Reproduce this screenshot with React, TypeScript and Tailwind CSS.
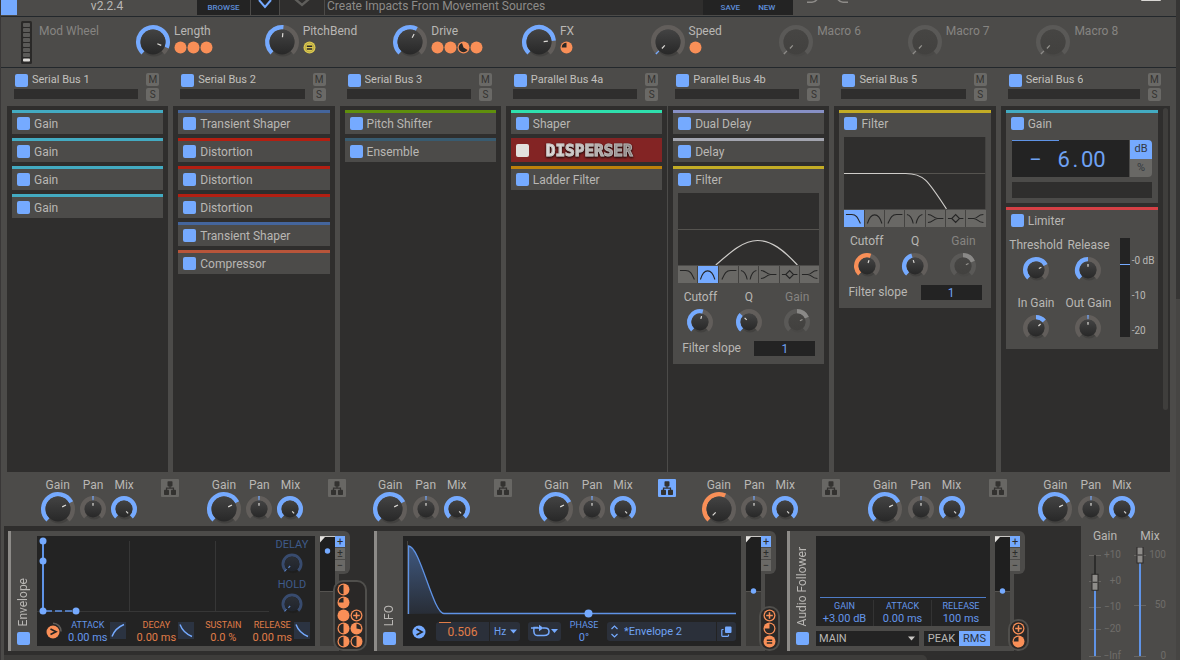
import { useId, useState, type ReactNode } from "react";

const BLUE = "#75aaff";
const ORANGE = "#f98f57";
const SWEEP = 137;

/* ---------- Drawing helpers ---------- */

function point(c: number, r: number, deg: number) {
  const a = (deg * Math.PI) / 180;
  return `${(c + r * Math.sin(a)).toFixed(2)} ${(c - r * Math.cos(a)).toFixed(2)}`;
}

function arc(c: number, r: number, from: number, to: number) {
  const large = to - from > 180 ? 1 : 0;
  return `M${point(c, r, from)} A${r} ${r} 0 ${large} 1 ${point(c, r, to)}`;
}

type KnobProps = {
  label: string;
  value: number;
  pointer?: number;
  size?: "lg" | "md" | "sm";
  tone?: string;
  bipolar?: boolean;
  dim?: boolean;
  navy?: boolean;
};

const KNOB = {
  lg: { box: 36, r: 17, w: 4.4 },
  md: { box: 28, r: 13, w: 4.4 },
  sm: { box: 22, r: 10.5, w: 3 },
};

function Knob({ label, value, pointer, size = "md", tone = BLUE, bipolar, dim, navy }: KnobProps) {
  const [v, setV] = useState(value);
  const gradient = useId();
  const { box, r, w } = KNOB[size];
  const c = box / 2;
  const mid = r - w / 2;
  const body = r - w - 0.2;
  const angle = (v * 2 - 1) * SWEEP;
  const hand = pointer === undefined || v !== value ? angle : pointer;
  let from = -SWEEP;
  let to = Math.max(angle, -SWEEP + 5);
  if (bipolar) {
    from = Math.min(0, angle);
    to = Math.max(0, angle);
    if (to - from < 5) {
      from -= 3;
      to += 3;
    }
  }
  const track = navy ? "#384b6e" : dim ? "#5a5957" : "#625e5b";
  const top = navy ? "#2b2f36" : dim ? "#464543" : "#434343";
  const bottom = navy ? "#20242b" : dim ? "#42413f" : "#282828";
  return (
    <span className="relative block shrink-0">
      <svg className="block" width={box} height={box} viewBox={`0 0 ${box} ${box}`} fill="none" aria-hidden="true">
        <defs>
          <linearGradient id={gradient} x1="0" y1="0" x2="0" y2="1">
            <stop offset="0" stopColor={top} />
            <stop offset="1" stopColor={bottom} />
          </linearGradient>
        </defs>
        <circle cx={c + 1} cy={c + 1} r={body + 1} fill="#000" opacity={dim ? 0.04 : 0.13} />
        <path d={arc(c, mid, -SWEEP, SWEEP)} stroke={track} strokeWidth={w} />
        <path d={arc(c, mid, from, to)} stroke={tone} strokeWidth={w} />
        <circle cx={c} cy={c} r={body} fill={`url(#${gradient})`} />
        <path
          d={`M${point(c, body * 0.38, hand)} L${point(c, body * 0.72, hand)}`}
          stroke={navy ? "#5b86cc" : dim ? "#96948f" : "#dedcd8"}
          strokeWidth="1.2"
        />
      </svg>
      <input
        type="range"
        min={0}
        max={1}
        step={0.01}
        value={v}
        aria-label={label}
        onChange={(e) => setV(Number(e.target.value))}
        className="absolute inset-0 m-0 h-full w-full cursor-pointer opacity-0"
      />
    </span>
  );
}

function Toggle({ label, white }: { label: string; white?: boolean }) {
  return (
    <input
      type="checkbox"
      defaultChecked
      aria-label={label}
      className={
        white
          ? "m-0 block h-[13px] w-[13px] shrink-0 appearance-none rounded-[2px] bg-[#8b4b4b] checked:bg-[#e2e0de]"
          : "m-0 block h-[13px] w-[13px] shrink-0 appearance-none rounded-[2px] bg-[#65635f] checked:bg-[#75aaff]"
      }
    />
  );
}

type DotKind = "full" | "half" | "threeQuarter" | "quarter" | "notched" | "moon" | "plus" | "equals" | "equalsYellow";

function Dot({ kind }: { kind: DotKind }) {
  const fill = kind === "equalsYellow" ? "#dcc94f" : ORANGE;
  const dark = "#2a2827";
  return (
    <svg className="block shrink-0" width="13" height="13" viewBox="0 0 13 13" aria-hidden="true">
      <circle cx="6.5" cy="6.5" r="6" fill={fill} />
      {kind === "half" && <path d="M6.5 1.7 A4.8 4.8 0 0 0 6.5 11.3 Z" fill={dark} />}
      {kind === "threeQuarter" && <path d="M6.5 6.5 H1.7 A4.8 4.8 0 0 1 6.5 1.7 Z" fill={dark} />}
      {kind === "quarter" && <path d="M6.5 6.5 V1.7 A4.8 4.8 0 1 1 1.7 6.5 Z" fill={dark} />}
      {kind === "notched" && <path d="M6.5 6.5 V1.7 A4.8 4.8 0 0 1 11.1 7.6 Z" fill={dark} />}
      {kind === "moon" && <path d="M6.5 6.5 L5 1.9 A4.8 4.8 0 1 0 10.6 9 Z" fill={dark} />}
      {kind === "plus" && (
        <>
          <circle cx="6.5" cy="6.5" r="4.7" fill={dark} />
          <path d="M6.5 3.2 V9.8 M3.2 6.5 H9.8" stroke={fill} strokeWidth="1.5" />
        </>
      )}
      {(kind === "equals" || kind === "equalsYellow") && (
        <>
          {kind === "equalsYellow" && (
            <circle cx="6.5" cy="6.5" r="4.4" fill="none" stroke="#4a4524" strokeWidth="0.6" opacity="0.4" />
          )}
          <path d="M3.8 5.2 H9.2 M3.8 8 H9.2" stroke={dark} strokeWidth="1.5" />
        </>
      )}
    </svg>
  );
}

/* ---------- Top bar ---------- */

function TopBar() {
  return (
    <header className="flex h-4 overflow-hidden text-[12px] leading-[13px]">
      <div className="flex w-[196px] bg-[#4c4b49] text-[#b9b7b4]">
        <span className="h-[15px] w-4 bg-[#75aaff]" />
        <span className="flex-1 text-center">v2.2.4</span>
      </div>
      <button type="button" className="h-[15px] w-[53px] bg-[#232323] pb-px text-[8px] font-medium text-[#5f8fdb]">
        BROWSE
      </button>
      <button type="button" aria-label="Previous preset" className="ml-px flex h-[15px] w-7 justify-center bg-[#232323]">
        <svg width="16" height="10" viewBox="0 0 16 10" fill="none">
          <path d="M2 0 L8 7 L14 0" stroke={BLUE} strokeWidth="2" />
        </svg>
      </button>
      <button type="button" aria-label="Next preset" className="ml-px flex h-[15px] w-[44px] justify-center bg-[#2f2e2d]">
        <svg width="16" height="10" viewBox="0 0 16 10" fill="none">
          <path d="M1 -1 L8 5 L15 -1" stroke="#5f5e5b" strokeWidth="2.4" />
        </svg>
      </button>
      <h1 className="ml-px h-[15px] flex-1 truncate bg-[#2f2e2d] pl-0.5 text-[#8d8b88]">
        Create Impacts From Movement Sources
      </h1>
      <div className="flex h-[15px] w-[90px] justify-center gap-[18px] bg-[#232323] pb-px text-[8px] font-medium text-[#5f8fdb]">
        <button type="button">SAVE</button>
        <button type="button">NEW</button>
      </div>
      <div className="flex w-[383px] items-start justify-between bg-[#4c4b49] pr-[15px] pl-3">
        <svg width="50" height="4" viewBox="0 0 50 4" fill="none" aria-hidden="true">
          <path d="M2 2.2 H7 Q10 2.2 12 -0.5 M43 2.2 H38 Q35 2.2 33 -0.5" stroke="#8d8b88" strokeWidth="1.6" />
        </svg>
        <span className="h-px w-5 rounded-b bg-[#d8d6d3]" />
      </div>
    </header>
  );
}

/* ---------- Macros ---------- */

const MACROS: { name: string; value: number; dots: DotKind[]; dim?: boolean }[] = [
  { name: "Length", value: 0.91, dots: ["full", "full", "full"] },
  { name: "PitchBend", value: 0.52, dots: ["equalsYellow"] },
  { name: "Drive", value: 0.6, dots: ["full", "full", "moon", "full"] },
  { name: "FX", value: 0.81, dots: ["threeQuarter"] },
  { name: "Speed", value: 0, dots: ["full"] },
  { name: "Macro 6", value: 0, dots: [], dim: true },
  { name: "Macro 7", value: 0, dots: [], dim: true },
  { name: "Macro 8", value: 0, dots: [], dim: true },
];

function Macros() {
  return (
    <section className="flex h-[52px] items-center border-y border-[#23282c] bg-[#4c4b49] pr-3 pl-5 text-[12px] leading-4 text-[#b9b7b4]">
      <div className="flex w-[114px] gap-[7px] self-stretch pt-1">
        <svg width="11" height="44" viewBox="0 0 11 44" aria-hidden="true">
          <rect width="11" height="43" rx="1.5" fill="#2a2928" />
          {[2, 7, 12, 17, 22, 27, 32].map((y) => (
            <rect key={y} x="2" y={y} width="7" height="4" rx="0.8" fill="#5b5a58" />
          ))}
          <rect x="2" y="37.5" width="7" height="3" rx="0.8" fill="#dddbd8" />
        </svg>
        <span className="pt-0.5 text-[#868481]">Mod Wheel</span>
      </div>
      {MACROS.map((m) => (
        <div key={m.name} className="flex flex-1 items-center gap-[3px]">
          <Knob label={m.name} value={m.value} size="lg" dim={m.dim} tone={m.dim ? "#8d8b88" : BLUE} />
          <div className="-mt-0.5 h-9">
            <div className={m.dim ? "text-[#868481]" : ""}>{m.name}</div>
            <div className="flex pt-0.5">
              {m.dots.map((d, i) => (
                <Dot key={i} kind={d} />
              ))}
            </div>
          </div>
        </div>
      ))}
    </section>
  );
}

/* ---------- Effect modules ---------- */

function Module({ name, strip, children }: { name: string; strip: string; children?: ReactNode }) {
  return (
    <article className="bg-[#4c4b49]">
      <div className={`h-[3px] ${strip}`} />
      <div className="flex h-[21px] items-center gap-1 pl-[5px] text-[12px] leading-4 text-[#b9b7b4]">
        <Toggle label={name} />
        <span>{name}</span>
      </div>
      {children}
    </article>
  );
}

const FILTER_TYPES = [
  { name: "Low pass", d: "M2 4.5 H8 C13 4.5 14.5 8.5 17 13.5" },
  { name: "Band pass", d: "M2.5 13.5 C6 2 14 2 17.5 13.5" },
  { name: "High pass", d: "M3 13.5 C5.5 8.5 7 4.5 12 4.5 H18" },
  { name: "Notch", d: "M2 4.5 C5 5 7.5 9 8.5 13.5 M18 4.5 C15 5 12.5 9 11.5 13.5" },
  { name: "Low shelf", d: "M2 4.5 C7 4.5 8 8.5 12 8.5 H18 M2 12.5 C7 12.5 8 8.5 12 8.5" },
  { name: "Peak", d: "M2 8.5 H6 L10 4.5 L14 8.5 L10 12.5 L6 8.5 M14 8.5 H18" },
  { name: "High shelf", d: "M2 8.5 H8 C12 8.5 12 4.5 18 4.5 M8 8.5 C12 8.5 12 12.5 18 12.5" },
];

function Filter({ active, curve, cutoffTone, cutoff, q }: {
  active: number;
  curve: string;
  cutoffTone: string;
  cutoff: number;
  q: number;
}) {
  const [type, setType] = useState(active);
  const slope = useId();
  return (
    <Module name="Filter" strip="bg-[#c3ac25]">
      <div className="px-[5px] pt-[3px]">
        <svg className="block w-full" height="72" viewBox="0 0 142 72" preserveAspectRatio="none" fill="none" aria-hidden="true">
          <rect width="142" height="72" fill="#2f2e2d" />
          <path d="M0 36.5 H142" stroke="#55534f" />
          <path d={curve} stroke="#cfcdca" strokeWidth="1.2" />
        </svg>
        <div className="mt-px grid grid-cols-7 gap-px bg-[#444341]">
          {FILTER_TYPES.map((f, i) => (
            <button
              key={f.name}
              type="button"
              aria-label={f.name}
              onClick={() => setType(i)}
              className={i === type ? "h-[17px] bg-[#75aaff]" : "h-[17px] bg-[#696865]"}
            >
              <svg className="block h-[17px] w-full" viewBox="0 0 20 17" preserveAspectRatio="none" fill="none">
                <path d={f.d} stroke="#252525" strokeWidth="1.1" />
              </svg>
            </button>
          ))}
        </div>
      </div>
      <div className="grid grid-cols-3 px-[3px] pt-[7px] text-[12px] leading-[14px] text-[#b9b7b4]">
        <div className="flex flex-col items-center gap-1">
          Cutoff
          <Knob label="Cutoff" value={cutoff} tone={cutoffTone} />
        </div>
        <div className="flex flex-col items-center gap-1">
          Q
          <Knob label="Q" value={q} />
        </div>
        <div className="flex flex-col items-center gap-1 text-[#868481]">
          Gain
          <Knob label="Filter gain" value={0.74} bipolar dim tone="#8a8987" />
        </div>
      </div>
      <div className="flex items-center justify-between px-[9px] pt-[5px] pb-2 text-[12px] text-[#b9b7b4]">
        <label htmlFor={slope} className="leading-[15px]">Filter slope</label>
        <input
          id={slope}
          defaultValue="1"
          className="h-[15px] w-[61px] bg-[#232323] text-center text-[12px] text-[#6fa2f3] outline-none"
        />
      </div>
    </Module>
  );
}

function GainModule() {
  const [unit, setUnit] = useState("dB");
  return (
    <Module name="Gain" strip="bg-[#43abc2]">
      <div className="px-[6px] pt-[6px] pb-[5px]">
        <div className="flex h-[37px] gap-px">
          <div className="flex flex-1 flex-col bg-[#232323]">
            <div className="h-px w-2/5 bg-[#5f93e6]" />
            <div className="flex flex-1 items-center justify-center gap-4 pt-0.5 pr-1.5 text-[22px] leading-[30px] text-[#6fa2f3]">
              <span>−</span>
              <span>
                6<span className="inline-block w-[11px] text-center">.</span>00
              </span>
            </div>
          </div>
          <div className="flex w-[22px] flex-col text-[11px] leading-4 text-[#33383f]">
            {["dB", "%"].map((u) => (
              <button
                key={u}
                type="button"
                onClick={() => setUnit(u)}
                className={u === unit ? "flex-1 rounded-tr-sm bg-[#75aaff]" : "flex-1 rounded-br-sm bg-[#696865]"}
              >
                {u}
              </button>
            ))}
          </div>
        </div>
        <div className="mt-[5px] h-4 bg-[#2f2e2d]" />
      </div>
    </Module>
  );
}

function Limiter() {
  const knobs = [
    { name: "Threshold", value: 0.73, bipolar: false },
    { name: "Release", value: 0.5, bipolar: false },
    { name: "In Gain", value: 0.68, bipolar: true },
    { name: "Out Gain", value: 0.5, bipolar: true },
  ];
  return (
    <Module name="Limiter" strip="bg-[#d64045]">
      <div className="flex pt-[7px] pb-[7px] pl-1">
        <div className="grid w-[105px] grid-cols-2 gap-y-3 text-[12px] leading-[14px] text-[#b9b7b4]">
          {knobs.map((k) => (
            <div key={k.name} className="flex flex-col items-center gap-1 whitespace-nowrap">
              {k.name}
              <Knob label={k.name} value={k.value} bipolar={k.bipolar} />
            </div>
          ))}
        </div>
        <div className="ml-[5px] h-[99px] w-2.5 bg-[#232323] pt-[26px]">
          <div className="h-px bg-[#75aaff]" />
        </div>
        <ul className="ml-0.5 flex h-[99px] flex-1 flex-col justify-between pt-[17px] text-[10px] leading-3 whitespace-nowrap text-[#b9b7b4]">
          <li>-0 dB</li>
          <li>-10</li>
          <li>-20</li>
        </ul>
      </div>
    </Module>
  );
}

function Disperser() {
  return (
    <article className="flex h-6 items-center bg-[#832424] pl-[5px]">
      <Toggle label="Disperser" white />
      <span className="bg-gradient-to-r from-[#f4f2f0] via-[#c9c5c3] to-[#857d7c] bg-clip-text pt-px pl-[17px] font-['DejaVu_Sans_Mono'] text-[16px] leading-5 font-bold text-transparent drop-shadow-[0_1px_1px_rgba(0,0,0,0.9)] [-webkit-text-stroke:1px_rgba(190,186,184,0.75)]">
        DISPERSER
      </span>
    </article>
  );
}

/* ---------- Buses ---------- */

function Routing({ active, narrow }: { active?: boolean; narrow?: boolean }) {
  return (
    <button
      type="button"
      aria-label="Routing"
      className={`z-10 mt-[7px] h-[18px] w-[18px] justify-self-end rounded-[1px] ${narrow ? "-mr-[9px]" : "-mr-[11px]"} ${
        active ? "bg-[#75aaff]" : "bg-[#686764]"
      }`}
    >
      <svg className="block" width="18" height="18" viewBox="0 0 18 18" aria-hidden="true">
        <rect x="6.5" y="2.2" width="5" height="5.2" rx="0.8" fill="#333230" />
        <rect x="3" y="10.8" width="5" height="5.2" rx="0.8" fill="#333230" />
        <rect x="10" y="10.8" width="5" height="5.2" rx="0.8" fill="#333230" />
        <path d="M9 7 V9.2 M5.5 11 V9.2 H12.5 V11" fill="none" stroke="#333230" strokeWidth="1.2" />
      </svg>
    </button>
  );
}

function Bus({ name, children, last, paired, joined, routed, gainTone = BLUE, gain = 0.73, pointer }: {
  name: string;
  children: ReactNode;
  last?: boolean;
  paired?: boolean;
  joined?: boolean;
  routed?: boolean;
  gainTone?: string;
  gain?: number;
  pointer?: number;
}) {
  const spacing = joined ? "ml-px" : "ml-[5px] first:ml-0";
  return (
    <section className={`flex min-w-0 flex-col ${last ? "flex-[1_1_8px]" : "flex-[1_1_0px]"} ${spacing}`}>
      <header className="flex h-[38px] justify-between gap-2 pt-[5px] pr-[9px] pl-[7px] text-[11px] leading-[14px] text-[#c2c0bd]">
        <div className="min-w-0 flex-1">
          <div className="flex h-[14px] items-center gap-1 pl-px">
            <Toggle label={name} />
            <h2 className="truncate">{name}</h2>
          </div>
          <div className="mt-0.5 h-2.5 bg-[#2f2e2d]" />
        </div>
        <div className="flex flex-col gap-0.5 text-[10px] leading-[13px] text-[#343331]">
          <button type="button" aria-label={`Mute ${name}`} className="h-[13px] w-[13px] rounded-[2px] bg-[#6a6966]">M</button>
          <button type="button" aria-label={`Solo ${name}`} className="h-[13px] w-[13px] rounded-[2px] bg-[#6a6966]">S</button>
        </div>
      </header>
      <div className={`flex flex-1 bg-[#2f2e2d] pt-1 pl-[5px] ${last ? "pr-0.5" : "pr-[5px]"}`}>
        <div className="flex min-w-0 flex-1 flex-col gap-1">{children}</div>
        {last && <div className="-mt-0.5 ml-[5px] h-5/6 w-[5px] rounded-sm bg-[#3f3e3c]" />}
      </div>
      <footer className="grid h-[54px] grid-cols-[1fr_auto_1fr] text-[12px] leading-[14px] text-[#b9b7b4]">
        <div className="col-start-2 flex gap-[5px] pt-1.5 pl-0.5">
          <div className="flex w-[35px] flex-col items-center">
            Gain
            <div className="flex h-[34px] items-center">
              <Knob label="Gain" value={gain} pointer={pointer} size="lg" tone={gainTone} />
            </div>
          </div>
          <div className="flex w-[26px] flex-col items-center">
            Pan
            <div className="flex h-[34px] items-center">
              <Knob label="Pan" value={0.5} bipolar />
            </div>
          </div>
          <div className="flex w-[26px] flex-col items-center">
            Mix
            <div className="flex h-[34px] items-center">
              <Knob label="Mix" value={1} />
            </div>
          </div>
        </div>
        {!last && <Routing active={routed} narrow={paired} />}
      </footer>
    </section>
  );
}

/* ---------- Modulators ---------- */

function SideLabel({ name }: { name: string }) {
  return (
    <div className="flex w-6 flex-col items-center justify-end gap-1.5 bg-[#4c4b49] pb-1.5">
      <span className="rotate-180 text-[12px] leading-[15px] whitespace-nowrap text-[#b9b7b4] [writing-mode:vertical-rl]">
        {name}
      </span>
      <Toggle label={name} />
    </div>
  );
}

function Amount({ y }: { y: number }) {
  return (
    <svg className="block" width="15" height="110" viewBox="0 0 15 110" aria-hidden="true">
      <rect width="15" height="55" fill="#1f1f1f" />
      <rect y="55" width="15" height="55" fill="#3b3a38" />
      <path d="M0 55.5 H15" stroke="#555350" />
      <path d="M0 0.5 H15" stroke="#c9c7c4" />
      <path d="M0 1 H5 L0 6.5 Z" fill="#e5e3e0" />
      <circle cx="7.5" cy={y} r="2.7" fill={BLUE} />
    </svg>
  );
}

function Modulator({ name, amount, dots, children }: {
  name: string;
  amount: number;
  dots: DotKind[][];
  children: ReactNode;
}) {
  return (
    <article className="flex h-[120px] shrink-0">
      <div className="w-[3px] bg-[#8d8b88]" />
      <SideLabel name={name} />
      <div className="bg-[#4c4b49] py-[5px] pr-[5px] pl-0.5">{children}</div>
      <div className="bg-[#4c4b49] py-[5px]">
        <Amount y={amount} />
      </div>
      <div className="flex flex-col items-start justify-between border-l-4 border-[#4c4b49]">
        <div className="-ml-1 flex h-[43px] w-[15px] flex-col gap-px rounded-r-md bg-[#4c4b49] pt-[5px] text-[11px] leading-[10px] text-[#2b2b2b]">
          <button type="button" aria-label="Add modulation" className="h-[11px] w-2.5 bg-[#75aaff]">+</button>
          <button type="button" aria-label="Bipolar modulation" className="h-[11px] w-2.5 bg-[#6a6966]">±</button>
          <button type="button" aria-label="Subtract modulation" className="h-[11px] w-2.5 bg-[#6a6966]">−</button>
        </div>
        <div className="z-10 -ml-1.5 flex items-end rounded-[10px] border-2 border-[#504f4c] bg-[#2a2827] px-0.5 py-px">
          {dots.map((col, i) => (
            <div key={i}>
              {col.map((d, j) => (
                <Dot key={j} kind={d} />
              ))}
            </div>
          ))}
        </div>
      </div>
    </article>
  );
}

function Trigger({ tone, arced }: { tone: string; arced?: boolean }) {
  return (
    <svg
      className={arced ? "mt-[3px] -mr-1.5 block shrink-0" : "mt-[3px] block shrink-0"}
      width="18"
      height="18"
      viewBox="0 0 18 18"
      fill="none"
      aria-hidden="true"
    >
      {arced && <path d="M8 1.2 A8 8 0 0 1 16 9.5" stroke="#5d5b58" strokeWidth="1.6" />}
      <circle cx={arced ? 8 : 9} cy={arced ? 10 : 9} r="6.5" fill={tone} />
      <path d={arced ? "M5.5 7 L11 9.8 L5.5 12.6" : "M6.5 6 L12 9 L6.5 12"} stroke="#232323" strokeWidth="1.7" />
    </svg>
  );
}

function Param({ name, value, orange }: { name: string; value: string; orange?: boolean }) {
  return (
    <div className={`text-center whitespace-nowrap ${orange ? "text-[#e07d48]" : "text-[#6396ea]"}`}>
      <div className="text-[9px] leading-3">{name}</div>
      <div className="text-[11px] leading-[13px]">{value}</div>
    </div>
  );
}

function CurveButton({ name, rise }: { name: string; rise?: boolean }) {
  return (
    <button type="button" aria-label={name} className="mt-[3px] h-[17px] w-4 shrink-0 bg-[#2b3341]">
      <svg className="block" width="16" height="17" viewBox="0 0 16 17" fill="none">
        <path d={rise ? "M2 14.5 C4 9 8 5 14 2.5" : "M2 2.5 C4 8 8 12 14 14.5"} stroke={BLUE} strokeWidth="1.4" />
      </svg>
    </button>
  );
}

function Envelope() {
  return (
    <Modulator
      name="Envelope"
      amount={15}
      dots={[
        ["half", "threeQuarter", "full", "half", "half"],
        ["plus", "notched", "half"],
      ]}
    >
      <div className="flex h-[110px] w-[278px] flex-col bg-[#232323]">
        <div className="flex h-[83px]">
          <svg width="235" height="83" viewBox="0 0 235 83" fill="none" aria-hidden="true">
            <path d="M92.5 5 V75 M178.5 5 V75 M0 75.5 H232" stroke="#363636" />
            <path d="M6 5 V75" stroke="#5f93e6" strokeWidth="2" />
            <path d="M8 75 H39" stroke="#5f93e6" strokeWidth="1.5" strokeDasharray="7 3" />
            {[[6, 5], [6, 25], [6, 75], [39, 75]].map(([x, y]) => (
              <circle key={`${x}-${y}`} cx={x} cy={y} r="3.5" fill={BLUE} />
            ))}
          </svg>
          <div className="flex w-[40px] flex-col items-center pt-px text-[11px] leading-4 text-[#3f5b8a]">
            DELAY
            <Knob label="Delay" value={0} size="sm" navy tone="#5b86cc" />
            <span className="mt-0.5">HOLD</span>
            <Knob label="Hold" value={0} size="sm" navy tone="#5b86cc" />
          </div>
        </div>
        <div className="flex h-[27px] items-start justify-between pr-[5px] pl-2">
          <Trigger tone={ORANGE} arced />
          <div className="flex gap-0.5">
            <Param name="ATTACK" value="0.00 ms" />
            <CurveButton name="Attack curve" rise />
          </div>
          <div className="flex gap-0.5">
            <Param name="DECAY" value="0.00 ms" orange />
            <CurveButton name="Decay curve" />
          </div>
          <Param name="SUSTAIN" value="0.0 %" orange />
          <div className="flex gap-0.5">
            <Param name="RELEASE" value="0.00 ms" orange />
            <CurveButton name="Release curve" />
          </div>
        </div>
      </div>
    </Modulator>
  );
}

function Lfo() {
  return (
    <Modulator name="LFO" amount={55} dots={[["plus", "quarter", "equals"]]}>
      <div className="flex h-[110px] w-[338px] flex-col bg-[#232323]">
        <svg width="338" height="84" viewBox="0 0 338 84" fill="none" aria-hidden="true">
          <defs>
            <linearGradient id="lfo-fill" x1="0" y1="0" x2="0" y2="1">
              <stop offset="0" stopColor="#3f587f" />
              <stop offset="1" stopColor="#282d36" />
            </linearGradient>
          </defs>
          <path d="M4.5 5 V78" stroke="#454442" />
          <path d="M5 78 V10 C17 10 30 77.5 41 77.5 Z" fill="url(#lfo-fill)" />
          <path d="M5.5 78 V10 C17 10 30 77.5 41 77.5 H333" stroke="#5f93e6" strokeWidth="1.3" />
          <circle cx="185.5" cy="77.5" r="4" fill={BLUE} />
        </svg>
        <div className="flex h-[26px] items-start justify-between pr-[5px] pl-[7px] text-[11px] text-[#6fa2f3]">
          <Trigger tone={BLUE} />
          <div className="mt-0.5 flex h-[19px] gap-px">
            <div className="w-[53px] rounded-l-[3px] bg-[#2b303a]">
              <div className="ml-[3px] h-px w-3 bg-[#e07d48]" />
              <input
                aria-label="Rate"
                defaultValue="0.506"
                className="block h-[18px] w-full bg-transparent text-center text-[12px] text-[#e07d48] outline-none"
              />
            </div>
            <div className="flex w-[30px] items-center rounded-r-[3px] bg-[#2b303a]">
              <select aria-label="Rate unit" className="w-[20px] appearance-none bg-transparent pl-1 text-[10px] leading-4 outline-none">
                <option>Hz</option>
              </select>
              <svg width="7" height="5" viewBox="0 0 7 5" aria-hidden="true">
                <path d="M0 0.5 H7 L3.5 4.5 Z" fill={BLUE} />
              </svg>
            </div>
          </div>
          <button type="button" aria-label="Loop mode" className="mt-0.5 h-[19px] w-[33px] rounded-[3px] bg-[#2b303a]">
            <svg className="block" width="33" height="19" viewBox="0 0 33 19" fill="none">
              <path d="M3 6 H12 M10 5.5 H6 Q5 13.5 9 13.5 H16 Q21 13.5 21 9.5 Q21 6 17 6 H15" stroke={BLUE} strokeWidth="1.5" />
              <path d="M11 2.8 L15.5 6 L11 9.2 Z M23 7 H30 L26.5 11 Z" fill={BLUE} />
            </svg>
          </button>
          <div className="w-[30px] text-center text-[#6396ea]">
            <div className="text-[9px] leading-[11px]">PHASE</div>
            <div className="text-[11px] leading-[13px]">0°</div>
          </div>
          <div className="mt-0.5 flex h-[19px] gap-px">
            <div className="flex w-[109px] items-center rounded-l-[3px] bg-[#2b303a] pl-1">
              <svg width="7" height="13" viewBox="0 0 7 13" fill="none" aria-hidden="true">
                <path d="M0.5 4 L3.5 1 L6.5 4 M0.5 9 L3.5 12 L6.5 9" stroke={BLUE} strokeWidth="1.2" />
              </svg>
              <select aria-label="Shape" className="flex-1 appearance-none bg-transparent pl-1.5 text-[11px] leading-4 outline-none">
                <option>*Envelope 2</option>
              </select>
            </div>
            <button type="button" aria-label="Copy shape" className="flex w-[19px] items-center justify-center rounded-r-[3px] bg-[#2b303a]">
              <svg width="11" height="11" viewBox="0 0 11 11" fill="none">
                <rect x="4" y="0.5" width="6.5" height="6.5" rx="1" fill={BLUE} />
                <path d="M2.5 3.5 H1.5 Q0.8 3.5 0.8 4.3 V9.5 Q0.8 10.3 1.5 10.3 H6.7 Q7.5 10.3 7.5 9.5 V8.5" stroke={BLUE} strokeWidth="1.2" />
              </svg>
            </button>
          </div>
        </div>
      </div>
    </Modulator>
  );
}

function AudioFollower() {
  const [mode, setMode] = useState("RMS");
  return (
    <Modulator name="Audio Follower" amount={55} dots={[["plus", "threeQuarter"]]}>
      <div className="w-[174px]">
        <div className="flex h-[90px] flex-col justify-end bg-[#232323]">
          <div className="mx-1 h-px bg-[#4f7cc6]" />
          <div className="grid h-7 grid-cols-3 divide-x divide-[#333] pt-0.5">
            <Param name="GAIN" value="+3.00 dB" />
            <Param name="ATTACK" value="0.00 ms" />
            <Param name="RELEASE" value="100 ms" />
          </div>
        </div>
        <div className="mt-[5px] flex h-[15px] gap-[5px] text-[11px] leading-[15px] text-[#b9b7b4]">
          <div className="flex flex-1 items-center bg-[#232323] pr-1">
            <select aria-label="Source" className="flex-1 appearance-none bg-transparent pl-[3px] outline-none">
              <option>MAIN</option>
            </select>
            <svg width="7" height="5" viewBox="0 0 7 5" aria-hidden="true">
              <path d="M0 0.5 H7 L3.5 4.5 Z" fill="#c9c7c4" />
            </svg>
          </div>
          <div className="flex">
            {["PEAK", "RMS"].map((m) => (
              <button
                key={m}
                type="button"
                onClick={() => setMode(m)}
                className={m === mode ? "h-[15px] bg-[#75aaff] px-1 text-[#2b3341]" : "h-[15px] bg-[#232323] px-1"}
              >
                {m}
              </button>
            ))}
          </div>
        </div>
      </div>
    </Modulator>
  );
}

/* ---------- Master section ---------- */

function Fader({ name, ticks, value }: { name: string; ticks: [string, number][]; value: number }) {
  const [v, setV] = useState(value);
  const id = useId();
  const y = 8 + (1 - v) * 101;
  return (
    <div className="flex w-11 flex-col items-center">
      <label htmlFor={id} className="text-[12px] leading-[14px] text-[#b9b7b4]">{name}</label>
      <span className="relative mt-1 block h-[113px] w-11">
        <svg className="block" width="44" height="113" viewBox="0 0 44 113" aria-hidden="true">
          {ticks.map(([label, at]) => (
            <g key={label}>
              <path d={`M6 ${at + 0.5} H18`} stroke="#676562" />
              <text x="38" y={at + 3} textAnchor="end" fontSize="10" fill="#6f6d6a">{label}</text>
            </g>
          ))}
          <path d="M12 8 V109" stroke="#232323" strokeWidth="1.5" />
          <path d={`M12 ${y} V109`} stroke="#5f93e6" strokeWidth="2" />
          <rect x="9" y={y - 8} width="6" height="16" fill="#8f8d8a" stroke="#2a2928" />
          <path d={`M9.5 ${y} H14.5`} stroke="#2a2928" />
        </svg>
        <input
          id={id}
          type="range"
          min={0}
          max={1}
          step={0.01}
          value={v}
          onChange={(e) => setV(Number(e.target.value))}
          className="absolute inset-0 m-0 h-full w-full cursor-pointer opacity-0 [direction:rtl] [writing-mode:vertical-lr]"
        />
      </span>
    </div>
  );
}

/* ---------- Page ---------- */

export default function App() {
  return (
    <div className="flex min-h-screen overflow-hidden bg-[#4c4b49] font-['Roboto',sans-serif]">
      <div className="w-px bg-[#393737]" />
      <main className="flex min-w-0 flex-1 flex-col">
        <TopBar />
        <Macros />
        <div className="flex flex-1 px-1.5">
          <Bus name="Serial Bus 1">
            <Module name="Gain" strip="bg-[#43abc2]" />
            <Module name="Gain" strip="bg-[#43abc2]" />
            <Module name="Gain" strip="bg-[#43abc2]" />
            <Module name="Gain" strip="bg-[#43abc2]" />
          </Bus>
          <Bus name="Serial Bus 2">
            <Module name="Transient Shaper" strip="bg-[#44659c]" />
            <Module name="Distortion" strip="bg-[#b31f12]" />
            <Module name="Distortion" strip="bg-[#b31f12]" />
            <Module name="Distortion" strip="bg-[#b31f12]" />
            <Module name="Transient Shaper" strip="bg-[#44659c]" />
            <Module name="Compressor" strip="bg-[#b8553a]" />
          </Bus>
          <Bus name="Serial Bus 3">
            <Module name="Pitch Shifter" strip="bg-[#5f8f0c]" />
            <Module name="Ensemble" strip="bg-[#385b70]" />
          </Bus>
          <Bus name="Parallel Bus 4a" paired routed>
            <Module name="Shaper" strip="bg-[#2fe0ae]" />
            <Disperser />
            <Module name="Ladder Filter" strip="bg-[#bd810b]" />
          </Bus>
          <Bus name="Parallel Bus 4b" joined gainTone={ORANGE} gain={0.59} pointer={-135}>
            <Module name="Dual Delay" strip="bg-[#8790c6]" />
            <Module name="Delay" strip="bg-[#a3a5af]" />
            <Filter active={1} cutoffTone={BLUE} cutoff={0.555} q={0.33} curve="M38 72 C54 58 66 47.5 80 47.5 S106 57 120 72" />
          </Bus>
          <Bus name="Serial Bus 5">
            <Filter active={0} cutoffTone={ORANGE} cutoff={0.57} q={0.44} curve="M0 36.5 H62 C80 36.5 84 43 103 72" />
          </Bus>
          <Bus name="Serial Bus 6" last>
            <GainModule />
            <Limiter />
          </Bus>
        </div>
        <div className="flex h-[134px]">
          <div className="ml-[3px] flex min-w-0 flex-1 flex-col justify-between overflow-hidden bg-[#2f2e2d]">
            <div className="flex gap-[7px] pt-[5px] pl-1">
              <Envelope />
              <Lfo />
              <AudioFollower />
            </div>
            <div className="h-[5px] w-6/7 rounded-tr-md bg-[#3d3c3a]" />
          </div>
          <aside className="flex w-[95px] shrink-0 justify-between bg-[#4c4b49] pt-[3px] pr-1 pl-0.5">
            <Fader name="Gain" value={0.73} ticks={[["+10", 8], ["+0", 34], ["−10", 60], ["−20", 82], ["−Inf", 109]]} />
            <Fader name="Mix" value={1} ticks={[["100", 8], ["50", 58], ["0", 109]]} />
          </aside>
        </div>
      </main>
      <div className="flex w-1 flex-col">
        <div className="h-[299px] bg-[#363534]" />
        <div className="flex-1 bg-[#464543]" />
      </div>
    </div>
  );
}
